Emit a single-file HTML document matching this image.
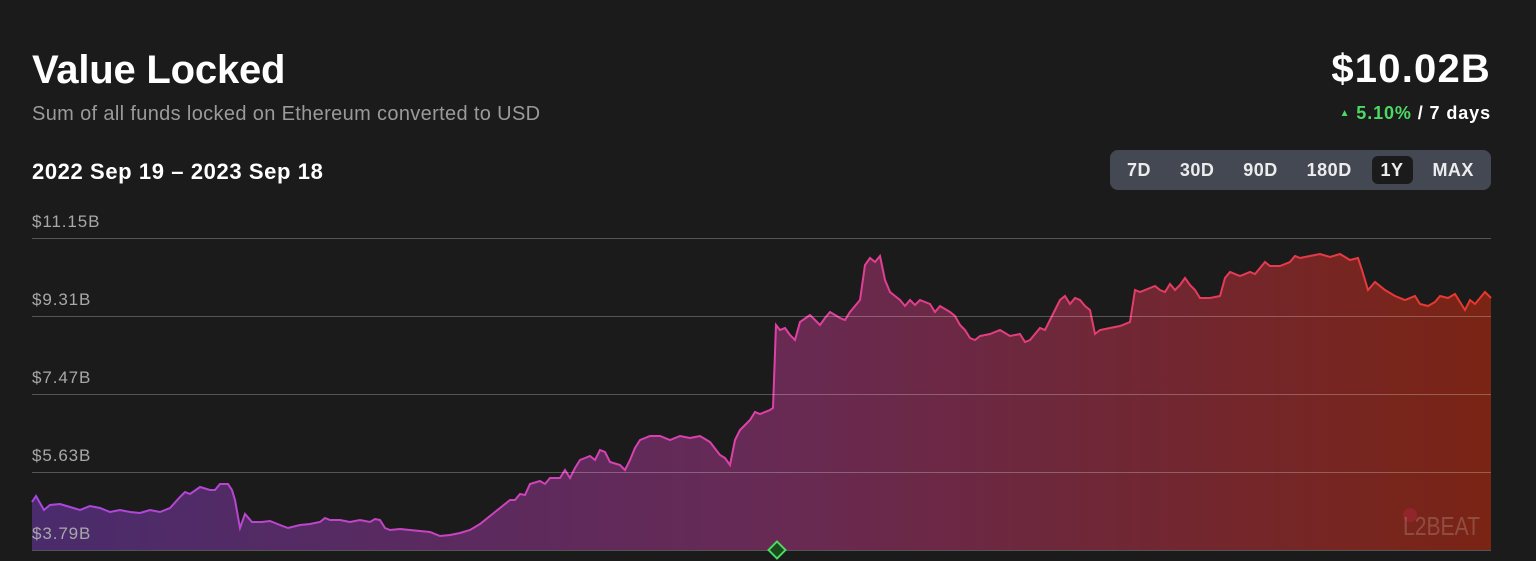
<!DOCTYPE html>
<html><head><meta charset="utf-8"><style>
body{margin:0;background:#1b1b1b;width:1536px;height:561px;overflow:hidden;font-family:"Liberation Sans",Arial,sans-serif;color:#fff;position:relative}
.a{position:absolute;white-space:nowrap}
.lbl{position:absolute;left:32px;font-size:17px;letter-spacing:0.9px;color:#a8a8a8}
.btn{display:inline-block;padding:0 9px;height:28px;line-height:28px;border-radius:6px;font-weight:bold;font-size:18px;letter-spacing:0.5px;color:#ececec}
</style></head><body>
<div class="a" style="left:32px;top:48px;font-size:40px;font-weight:bold;letter-spacing:-0.2px">Value Locked</div>
<div class="a" style="left:32px;top:103px;font-size:20px;letter-spacing:0.35px;color:#9a9a9a">Sum of all funds locked on Ethereum converted to USD</div>
<div class="a" style="right:45px;top:47px;font-size:40px;font-weight:bold;letter-spacing:1.2px">$10.02B</div>
<div class="a" style="right:45px;top:103px;font-size:18px;font-weight:bold;letter-spacing:0.9px"><span style="color:#4cd964;font-size:10px;vertical-align:3px">▲</span> <span style="color:#4cd964">5.10%</span> / 7 days</div>
<div class="a" style="left:32px;top:159px;font-size:22px;font-weight:bold;letter-spacing:0.6px">2022 Sep 19 – 2023 Sep 18</div>
<div class="a" style="left:1110px;top:150px;width:381px;height:40px;background:#434852;border-radius:8px;box-sizing:border-box;padding:6px 8px;display:flex;justify-content:space-between">
<span class="btn">7D</span><span class="btn">30D</span><span class="btn">90D</span><span class="btn">180D</span><span class="btn" style="background:#1b1b1b">1Y</span><span class="btn">MAX</span></div>
<svg class="a" style="left:0;top:0" width="1536" height="561">
<defs>
<linearGradient id="f" x1="32" x2="1491" gradientUnits="userSpaceOnUse"><stop offset="0" stop-color="#4a2b6c"/><stop offset="0.5" stop-color="#672a55"/><stop offset="1" stop-color="#7a2414"/></linearGradient>
<linearGradient id="s" x1="32" x2="1491" gradientUnits="userSpaceOnUse"><stop offset="0" stop-color="#a848e0"/><stop offset="0.5" stop-color="#e040a8"/><stop offset="1" stop-color="#e8382a"/></linearGradient>
</defs>
<path fill="url(#f)" d="M32,550 L32,502 36,496 44,510 50,505 60,504 70,507 80,510 90,506 100,508 110,512 120,510 130,512 140,513 150,510 160,512 170,508 180,497 185,492 190,494 200,487 210,490 215,490 220,484 228,484 232,490 235,500 240,528 245,514 252,522 262,522 270,521 280,525 288,528 300,525 310,524 320,522 325,518 330,520 340,520 350,522 360,520 370,522 375,519 380,520 385,528 390,530 400,529 410,530 420,531 430,532 440,536 450,535 460,533 470,530 480,524 490,516 500,508 510,500 515,500 520,494 525,495 530,484 540,481 545,484 550,478 560,478 565,470 570,478 575,468 580,460 585,458 590,456 595,460 600,450 605,452 610,462 620,465 625,470 630,460 635,448 640,440 650,436 660,436 670,440 680,436 690,438 700,436 710,442 720,455 725,458 730,465 735,440 740,430 745,425 750,420 755,412 760,414 770,410 773,408 776,325 780,330 785,328 790,335 795,340 800,322 810,315 815,320 820,325 825,318 830,312 840,318 845,320 850,312 855,306 860,300 865,265 870,258 875,262 880,256 885,280 890,292 895,296 900,300 905,306 910,300 915,305 920,300 930,304 935,312 940,306 950,312 955,316 960,325 965,330 970,338 975,340 980,336 990,334 1000,330 1010,336 1020,334 1025,342 1030,340 1040,328 1045,330 1050,320 1055,310 1060,300 1065,296 1070,304 1075,298 1080,300 1085,306 1090,310 1095,334 1100,330 1110,328 1120,326 1130,322 1135,290 1140,292 1150,288 1155,286 1160,290 1165,292 1170,284 1175,290 1180,285 1185,278 1190,285 1195,290 1200,298 1210,298 1220,296 1225,278 1230,272 1240,276 1250,272 1255,274 1260,268 1265,262 1270,266 1280,266 1290,262 1295,256 1300,258 1310,256 1320,254 1330,257 1340,254 1350,260 1358,258 1362,270 1368,290 1375,282 1385,290 1395,296 1405,300 1415,296 1420,304 1428,306 1435,302 1440,296 1448,298 1455,294 1460,302 1465,310 1470,300 1475,304 1480,298 1485,292 1491,298 L1491,550 Z"/>
<polyline fill="none" stroke="url(#s)" stroke-width="2" points="32,502 36,496 44,510 50,505 60,504 70,507 80,510 90,506 100,508 110,512 120,510 130,512 140,513 150,510 160,512 170,508 180,497 185,492 190,494 200,487 210,490 215,490 220,484 228,484 232,490 235,500 240,528 245,514 252,522 262,522 270,521 280,525 288,528 300,525 310,524 320,522 325,518 330,520 340,520 350,522 360,520 370,522 375,519 380,520 385,528 390,530 400,529 410,530 420,531 430,532 440,536 450,535 460,533 470,530 480,524 490,516 500,508 510,500 515,500 520,494 525,495 530,484 540,481 545,484 550,478 560,478 565,470 570,478 575,468 580,460 585,458 590,456 595,460 600,450 605,452 610,462 620,465 625,470 630,460 635,448 640,440 650,436 660,436 670,440 680,436 690,438 700,436 710,442 720,455 725,458 730,465 735,440 740,430 745,425 750,420 755,412 760,414 770,410 773,408 776,325 780,330 785,328 790,335 795,340 800,322 810,315 815,320 820,325 825,318 830,312 840,318 845,320 850,312 855,306 860,300 865,265 870,258 875,262 880,256 885,280 890,292 895,296 900,300 905,306 910,300 915,305 920,300 930,304 935,312 940,306 950,312 955,316 960,325 965,330 970,338 975,340 980,336 990,334 1000,330 1010,336 1020,334 1025,342 1030,340 1040,328 1045,330 1050,320 1055,310 1060,300 1065,296 1070,304 1075,298 1080,300 1085,306 1090,310 1095,334 1100,330 1110,328 1120,326 1130,322 1135,290 1140,292 1150,288 1155,286 1160,290 1165,292 1170,284 1175,290 1180,285 1185,278 1190,285 1195,290 1200,298 1210,298 1220,296 1225,278 1230,272 1240,276 1250,272 1255,274 1260,268 1265,262 1270,266 1280,266 1290,262 1295,256 1300,258 1310,256 1320,254 1330,257 1340,254 1350,260 1358,258 1362,270 1368,290 1375,282 1385,290 1395,296 1405,300 1415,296 1420,304 1428,306 1435,302 1440,296 1448,298 1455,294 1460,302 1465,310 1470,300 1475,304 1480,298 1485,292 1491,298"/>
<g stroke="#ffffff" stroke-opacity="0.25" stroke-width="1">
<line x1="32" x2="1491" y1="238.5" y2="238.5"/><line x1="32" x2="1491" y1="316.5" y2="316.5"/><line x1="32" x2="1491" y1="394.5" y2="394.5"/><line x1="32" x2="1491" y1="472.5" y2="472.5"/><line x1="32" x2="1491" y1="550.5" y2="550.5"/>
</g>
<circle cx="1410" cy="515" r="7" fill="#a02838" fill-opacity="0.6"/>
<text x="1403" y="535" font-family="Liberation Sans,sans-serif" font-size="26" fill="#ffffff" fill-opacity="0.18" textLength="77" lengthAdjust="spacingAndGlyphs">L2BEAT</text>
<rect x="771" y="544" width="12" height="12" transform="rotate(45 777 550)" fill="#1b4a1b" stroke="#4cd964" stroke-width="2"/>
</svg>
<div class="lbl" style="top:212px">$11.15B</div>
<div class="lbl" style="top:290px">$9.31B</div>
<div class="lbl" style="top:368px">$7.47B</div>
<div class="lbl" style="top:446px">$5.63B</div>
<div class="lbl" style="top:524px">$3.79B</div>
</body></html>
